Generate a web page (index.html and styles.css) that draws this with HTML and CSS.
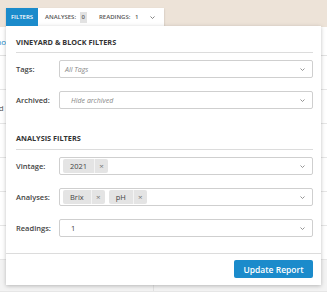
FILE: index.html
```html
<!DOCTYPE html>
<html>
<head>
    <title>Report Filters</title>
    <link rel="stylesheet" href="styles.css">
</head>
<body>

    <div class="page">
        <div class="topbar"></div>
        <div class="subnav"><a href="#" class="show-link">Show</a></div>
        <div class="grid">
            <div class="row"><div class="cell"></div><div class="cell"></div></div>
            <div class="row"><div class="cell">Field</div><div class="cell"></div></div>
            <div class="row"><div class="cell"></div><div class="cell"></div></div>
            <div class="row"><div class="cell"></div><div class="cell"></div></div>
            <div class="row"><div class="cell"></div><div class="cell"></div></div>
            <div class="row"><div class="cell"></div><div class="cell"></div></div>
            <div class="row shaded"><div class="cell"></div><div class="cell"></div></div>
        </div>
    </div>

    <div class="filter-menu">
        <div class="tabs">
            <span class="tab active">Filters</span>
            <span class="tab">Analyses: <span class="badge">0</span></span>
            <span class="tab readings">Readings: <span class="count">1</span></span>
            <svg class="chevron tab-chevron" width="5" height="3" viewBox="0 0 5 3"><path d="M0.5 0.5 L2.5 2.5 L4.5 0.5" fill="none" stroke="#777" stroke-width="0.9"/></svg>
        </div>

        <div class="panel">
            <div class="panel-body">
                <h3 class="section-title first">Vineyard &amp; Block Filters</h3>

                <div class="field">
                    <label>Tags:</label>
                    <div class="select">
                        <span class="placeholder">All Tags</span>
                        <svg class="chevron" width="5" height="3" viewBox="0 0 5 3"><path d="M0.5 0.5 L2.5 2.5 L4.5 0.5" fill="none" stroke="#888" stroke-width="0.9"/></svg>
                    </div>
                </div>

                <div class="field gap">
                    <label>Archived:</label>
                    <div class="select">
                        <span class="placeholder indent">Hide archived</span>
                        <svg class="chevron" width="5" height="3" viewBox="0 0 5 3"><path d="M0.5 0.5 L2.5 2.5 L4.5 0.5" fill="none" stroke="#888" stroke-width="0.9"/></svg>
                    </div>
                </div>

                <h3 class="section-title second">Analysis Filters</h3>

                <div class="field">
                    <label>Vintage:</label>
                    <div class="select chips">
                        <span class="chip"><span class="chip-text">2021</span><span class="chip-x">&times;</span></span>
                        <svg class="chevron" width="5" height="3" viewBox="0 0 5 3"><path d="M0.5 0.5 L2.5 2.5 L4.5 0.5" fill="none" stroke="#888" stroke-width="0.9"/></svg>
                    </div>
                </div>

                <div class="field gap">
                    <label>Analyses:</label>
                    <div class="select chips">
                        <span class="chip"><span class="chip-text">Brix</span><span class="chip-x">&times;</span></span>
                        <span class="chip"><span class="chip-text">pH</span><span class="chip-x">&times;</span></span>
                        <svg class="chevron" width="5" height="3" viewBox="0 0 5 3"><path d="M0.5 0.5 L2.5 2.5 L4.5 0.5" fill="none" stroke="#888" stroke-width="0.9"/></svg>
                    </div>
                </div>

                <div class="field gap">
                    <label>Readings:</label>
                    <div class="select">
                        <span class="value indent">1</span>
                        <svg class="chevron" width="5" height="3" viewBox="0 0 5 3"><path d="M0.5 0.5 L2.5 2.5 L4.5 0.5" fill="none" stroke="#888" stroke-width="0.9"/></svg>
                    </div>
                </div>
            </div>

            <div class="panel-footer">
                <button class="button">Update Report</button>
            </div>
        </div>
    </div>

</body>
</html>
```

FILE: styles.css
```css
body {
    margin: 0;
    font-family: "Open Sans", Arial, sans-serif;
    color: #333;
    background: #fff;
    overflow: hidden;
}

/* page behind the dropdown */
.page {
    height: 292px;
    display: flex;
    flex-direction: column;
}
.topbar {
    height: 27px;
    background-color: #ede3d8;
}
.subnav {
    height: 28px;
    border-bottom: 1px solid #e2e2e2;
    display: flex;
    align-items: center;
}
.show-link {
    color: #1b8bcb;
    font-size: 8px;
    text-decoration: none;
    text-indent: -8px;
    display: block;
}
.grid {
    flex: 1;
    display: flex;
    flex-direction: column;
}
.row {
    display: grid;
    grid-template-columns: 153px 1fr;
    height: 33px;
    border-bottom: 1px solid #e6e6e6;
}
.row.shaded {
    flex: 1;
    background-color: #f3f3f3;
}
.cell {
    font-size: 8px;
    color: #555;
    padding: 12px 0 0 0;
    text-indent: -14px;
}
.cell + .cell {
    border-left: 1px solid #e2e2e2;
}

/* dropdown */
.filter-menu {
    position: absolute;
    top: 8px;
    left: 6px;
}
.tabs {
    display: flex;
    width: max-content;
    align-items: center;
    height: 18px;
    padding-right: 9px;
    background: #fff;
    box-shadow: 0 1px 2px rgba(0, 0, 0, 0.2);
}
.tab {
    font-size: 6px;
    font-weight: 600;
    text-transform: uppercase;
    color: #555;
    margin-left: 7px;
    display: flex;
    align-items: center;
    white-space: pre;
}
.tab.active {
    margin-left: 0;
    height: 18px;
    width: 32px;
    justify-content: center;
    background-color: #1b8bcb;
    color: #fff;
}
.tab.readings {
    margin-left: 12px;
}
.count {
    margin-left: 3px;
}
.badge {
    display: inline-block;
    background-color: #e2e2e2;
    color: #666;
    padding: 1px 2px;
    margin-left: 2px;
    line-height: 9px;
}
.tab-chevron {
    margin-left: 12px;
}

.panel {
    width: 315px;
    height: 259px;
    box-sizing: border-box;
    background: #fff;
    box-shadow: 0 1px 4px rgba(0, 0, 0, 0.25);
    display: flex;
    flex-direction: column;
}
.panel-body {
    padding: 0 8px 0 10px;
    flex: 1;
}
.section-title {
    margin: 0;
    font-size: 7.3px;
    line-height: 11px;
    font-weight: 700;
    text-transform: uppercase;
    color: #333;
    padding-bottom: 4px;
    border-bottom: 1px solid #dcdcdc;
}
.section-title.first {
    margin-top: 11px;
}
.section-title.second {
    margin-top: 24px;
    padding-bottom: 5px;
}
.field {
    display: flex;
    align-items: center;
    margin-top: 7px;
}
.field.gap {
    margin-top: 13px;
}
.field label {
    width: 43px;
    flex-shrink: 0;
    font-size: 7.5px;
    font-weight: 600;
    color: #444;
}
.select {
    flex: 1;
    height: 18px;
    box-sizing: border-box;
    border: 1px solid #cfcfcf;
    border-radius: 2px;
    display: flex;
    align-items: center;
    padding: 0 7px 0 5px;
}
.select.chips {
    padding-left: 3px;
    gap: 4px;
}
.placeholder {
    font-size: 7px;
    font-style: italic;
    color: #888;
}
.value {
    font-size: 7.5px;
    color: #444;
}
.indent {
    padding-left: 6px;
}
.select .chevron {
    margin-left: auto;
}
.chip {
    display: flex;
    height: 14px;
    background-color: #e4e4e4;
    border-radius: 2px;
    font-size: 7.5px;
    color: #444;
}
.chip-text {
    padding: 0 7px;
    line-height: 14px;
}
.chip-x {
    width: 13px;
    text-align: center;
    line-height: 14px;
    color: #777;
    border-left: 1px solid #f4f4f4;
    font-size: 8px;
}

.panel-footer {
    margin-top: 16px;
    border-top: 1px solid #dcdcdc;
    padding: 6px 8px 8px 0;
    display: flex;
    justify-content: flex-end;
}
.button {
    background-color: #1b8bcb;
    border: none;
    color: white;
    width: 79px;
    height: 18px;
    padding: 0;
    font-family: "Open Sans", Arial, sans-serif;
    font-size: 8.5px;
    font-weight: 600;
    border-radius: 2px;
    cursor: pointer;
}
```
